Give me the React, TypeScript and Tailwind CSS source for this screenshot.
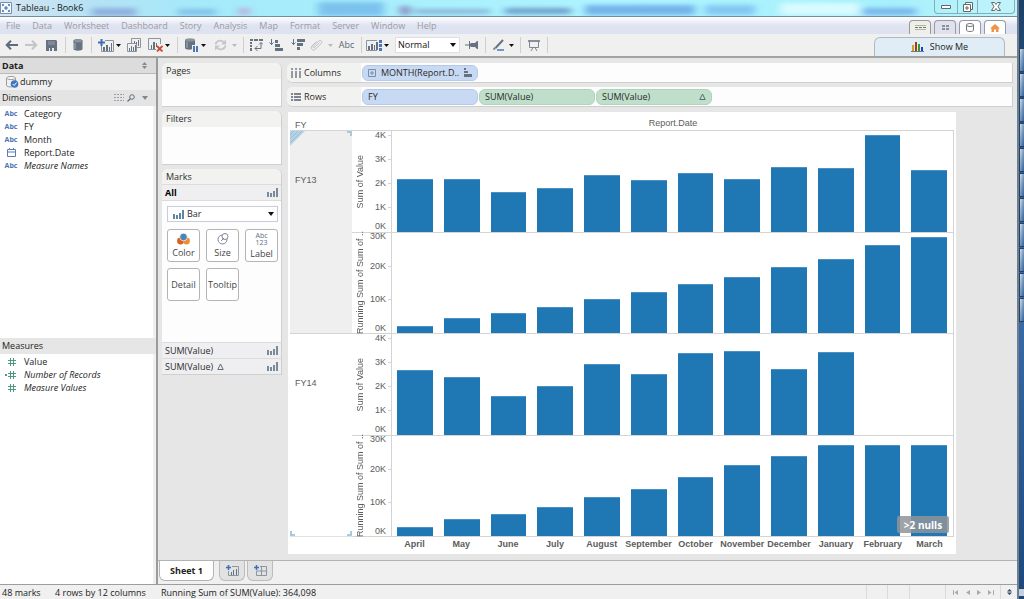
import React, { useState } from 'react';
import clsx from 'clsx';

const MENUS = ['File', 'Data', 'Worksheet', 'Dashboard', 'Story', 'Analysis', 'Map', 'Format', 'Server', 'Window', 'Help'];

const MONTHS = [
  'April', 'May', 'June', 'July', 'August', 'September',
  'October', 'November', 'December', 'January', 'February', 'March',
];

// values in thousands, null = no data for the month
const YEARS: { name: string; values: (number | null)[] }[] = [
  { name: 'FY13', values: [2.2, 2.17, 1.63, 1.81, 2.33, 2.13, 2.43, 2.17, 2.7, 2.63, 4.02, 2.57] },
  { name: 'FY14', values: [2.68, 2.39, 1.62, 2.03, 2.95, 2.51, 3.4, 3.49, 2.72, 3.42, null, null] },
];

const runningSum = (values: (number | null)[]) => {
  let total = 0;
  return values.map(v => (total += v ?? 0));
};

const Glyph: React.FC<{ w: number; h: number; children: React.ReactNode }> = ({ w, h, children }) => (
  <svg width={w} height={h} viewBox={`0 0 ${w} ${h}`} fill="none" className="block shrink-0" aria-hidden="true">
    {children}
  </svg>
);

const Caret = ({ color = '#111' }: { color?: string }) => (
  <Glyph w={5} h={3}><path d="M0 0h5L2.5 3z" fill={color} /></Glyph>
);

const WideCaret = ({ color = '#111' }: { color?: string }) => (
  <Glyph w={6} h={4}><path d="M0 0h6L3 4z" fill={color} /></Glyph>
);

const BarsIcon = ({ color = '#7a8a99' }: { color?: string }) => (
  <Glyph w={11} h={9}>
    <path d="M0 4h2v5H0zM3 5h2v4H3zM6 3h2v6H6zM9 0h2v9H9z" fill={color} />
  </Glyph>
);

const CylinderIcon = () => (
  <Glyph w={10} h={12}>
    <path d="M.5 2v8c0 2.200 9 2.200 9 0V2z" fill="#66727f" />
    <ellipse cx="5" cy="2" rx="4.500" ry="1.700" fill="#8b95a0" stroke="#66727f" strokeWidth=".6" />
    <path d="M2 4v6" stroke="#a9b2bb" />
  </Glyph>
);

const CalendarIcon = () => (
  <Glyph w={9} h={9}>
    <path d="M.5 1.500h8v7h-8zM.5 4h8M2.500 0v2M6.500 0v2" stroke="#5b7fb5" />
  </Glyph>
);

const HashIcon = ({ calculated = false }: { calculated?: boolean }) => (
  <Glyph w={12} h={8}>
    <path d="M5.500 0v8M8.500 0v8M3 2.500h8M3 5.500h8" stroke="#4d9a7c" />
    {calculated && <path d="M0 3h2v2H0z" fill="#4d9a7c" />}
  </Glyph>
);

const SortIcon = ({ descending = false }: { descending?: boolean }) => (
  <Glyph w={14} h={12}>
    <path d="M2.500 0v6M.5 3.500l2 2 2-2" stroke="#66727f" />
    <path
      d={descending ? 'M6 0h8v3H6zM6 4h6v3H6zM6 8h3v3H6z' : 'M6 1h3v3H6zM6 5h5v3H6zM6 9h8v3H6z'}
      fill="#66727f"
    />
  </Glyph>
);

interface ToolProps {
  label: string;
  width: string;
  children: React.ReactNode;
}

const Tool: React.FC<ToolProps> = ({ label, width, children }) => (
  <button type="button" aria-label={label} title={label} className={`flex h-5 shrink-0 items-center justify-center ${width}`}>
    {children}
  </button>
);

const Separator = ({ width }: { width: string }) => (
  <span className={`flex h-4 shrink-0 justify-center ${width}`}>
    <span className="w-px bg-[#cfcfcf]" />
  </span>
);

const TitleBar = () => (
  <header className="relative flex h-4 shrink-0 items-center overflow-hidden bg-[#a9ecfb]">
    <svg className="absolute inset-0 h-full w-full" preserveAspectRatio="none" viewBox="0 0 1017 16" aria-hidden="true">
      <defs>
        <filter id="glass" x="-10%" y="-80%" width="120%" height="260%"><feGaussianBlur stdDeviation="4 2" /></filter>
        <linearGradient id="sky" x1="0" x2="1">
          <stop offset="0" stopColor="#d5e5f2" />
          <stop offset=".09" stopColor="#b5e2f4" />
          <stop offset=".2" stopColor="#a4eafa" />
          <stop offset=".6" stopColor="#aef4ff" />
          <stop offset=".88" stopColor="#a5f0fc" />
          <stop offset="1" stopColor="#c2f4fb" />
        </linearGradient>
      </defs>
      <rect width="1017" height="16" fill="url(#sky)" />
      <g filter="url(#glass)">
        <rect x="92" y="8" width="44" height="8" fill="#8fb0de" />
        <rect x="178" y="9" width="38" height="6" fill="#84c0ea" />
        <rect x="238" y="8" width="12" height="7" fill="#b9b3dc" />
        <rect x="318" y="2" width="66" height="14" fill="#7cc2ee" />
        <rect x="400" y="6" width="10" height="9" fill="#8a8fc4" />
        <rect x="414" y="9" width="76" height="5" fill="#8ab8dc" />
        <rect x="505" y="8" width="66" height="6" fill="#6e9fcc" />
        <rect x="585" y="5" width="110" height="10" fill="#74b2ea" />
        <rect x="705" y="5" width="50" height="10" fill="#84c8f2" />
        <rect x="780" y="3" width="80" height="12" fill="#d9fbff" />
        <rect x="862" y="8" width="54" height="7" fill="#7cb6ec" />
      </g>
    </svg>
    <div className="relative flex flex-1 items-center gap-1">
      <Glyph w={12} h={12}>
        <path d="M.5.5h11v11H.5z" fill="#f4f8fc" stroke="#7c8fa8" />
        <path d="M6 4v4M4 6h4M3 2v2M2 3h2M9 2v2M8 3h2M3 8v2M2 9h2M9 8v2M8 9h2" stroke="#3f6aa5" />
      </Glyph>
      <h1 className="text-[9px] leading-4 text-[#1a1a1a]">Tableau - Book6</h1>
    </div>
    <div className="relative mr-[2px] flex h-[14px] self-start rounded-b border border-t-0 border-[#86aeb9] text-[#555]">
      <button type="button" aria-label="Minimize" className="flex w-[22px] items-center justify-center">
        <Glyph w={10} h={4}><path d="M.5.5h9v3h-9z" fill="#fff" stroke="#666" /></Glyph>
      </button>
      <button type="button" aria-label="Restore" className="flex w-[21px] items-center justify-center border-x border-[#86aeb9]">
        <Glyph w={10} h={10}>
          <path d="M2.500.5h7v7h-7z" fill="#fff" stroke="#666" />
          <path d="M.5 2.500h7v7h-7z" fill="#fff" stroke="#666" />
          <path d="M3 5h2v2H3z" stroke="#666" />
        </Glyph>
      </button>
      <button type="button" aria-label="Close" className="flex w-[36px] items-center justify-center">
        <Glyph w={10} h={9}>
          <path d="M.5.5h3L5 2.500 6.500.5h3L7 4.500l2.500 4h-3L5 6.500l-1.500 2h-3l2.500-4z" fill="#fff" stroke="#666" />
        </Glyph>
      </button>
    </div>
  </header>
);

const MenuBar = () => (
  <nav className="flex h-[18px] shrink-0 items-center justify-between border-t border-[#6d8fa0] bg-linear-to-b from-white via-[#dfe3f2] to-[#dde2f1] pr-[11px] pl-[6px]">
    <div className="flex gap-3 text-[9px] leading-4 text-[#9a9ba2]">
      {MENUS.map(menu => <button key={menu} type="button">{menu}</button>)}
    </div>
    <div className="flex items-end gap-[3px] self-end">
      <button type="button" aria-label="Worksheet view" className="flex h-[14px] w-[22px] items-center justify-center rounded-t border border-b-0 border-[#9a9a90] bg-[#eeeeea]">
        <Glyph w={11} h={5}>
          <path d="M0 0h11v1H0zM0 4h11v1H0z" fill="#b3b3a4" />
          <path d="M0 2h3v1H0zM4 2h3v1H4zM8 2h3v1H8z" fill="#77776a" />
        </Glyph>
      </button>
      <button type="button" aria-label="Dashboard view" className="flex h-[14px] w-[22px] items-center justify-center rounded-t border border-b-0 border-[#9a9aa4] bg-[#dfe2ec]">
        <Glyph w={7} h={5}><path d="M0 0h3v2H0zM4 0h3v2H4zM0 3h3v2H0zM4 3h3v2H4z" fill="#87929c" /></Glyph>
      </button>
      <button type="button" aria-label="Data source" className="flex h-[14px] w-[22px] items-center justify-center rounded-t border border-b-0 border-[#9a9aa4] bg-white">
        <Glyph w={8} h={9}>
          <path d="M.5 2v5c0 2 7 2 7 0V2" stroke="#777" />
          <ellipse cx="4" cy="2" rx="3.500" ry="1.500" stroke="#777" />
        </Glyph>
      </button>
      <button type="button" aria-label="Start page" className="flex h-[14px] w-[22px] items-center justify-center rounded-t border border-b-0 border-[#9a9aa4] bg-white">
        <Glyph w={10} h={8}><path d="M5 0l5 4.500H8.500V8H6V5.500H4V8H1.500V4.500H0z" fill="#ee9347" /></Glyph>
      </button>
    </div>
  </nav>
);

const Toolbar = () => {
  const [fit, setFit] = useState('Normal');

  return (
    <div className="flex h-6 shrink-0 items-center border-b-2 border-[#a3a49f] bg-[#f0f0f0] pr-3 pl-px">
      <Tool label="Undo" width="w-5">
        <Glyph w={13} h={10}><path d="M13 5H2M6 .8L1.700 5 6 9.200" stroke="#5f6b78" strokeWidth="2" /></Glyph>
      </Tool>
      <Tool label="Redo" width="w-5">
        <Glyph w={13} h={10}><path d="M0 5h11M7 .8L11.300 5 7 9.200" stroke="#c3c5c8" strokeWidth="2" /></Glyph>
      </Tool>
      <Tool label="Save" width="w-[21px]">
        <Glyph w={11} h={11}>
          <path d="M0 0h10l1 1v10H0z" fill="#66727f" />
          <path d="M2 1h7v4H2z" fill="#7e8995" />
          <path d="M3 8h5v3H3z" fill="#e9ecee" />
          <path d="M4 8h2v3H4z" fill="#66727f" />
        </Glyph>
      </Tool>
      <Separator width="w-[6px]" />
      <Tool label="Connect to data" width="w-5"><CylinderIcon /></Tool>
      <Separator width="w-[7px]" />
      <Tool label="New worksheet" width="w-[21px]">
        <Glyph w={16} h={13}>
          <path d="M7 1.500h8.500v11h-12V7" stroke="#8b95a0" />
          <path d="M5 8h2v4H5zM8 6h2v6H8zM11 8h1v4h-1zM13 4h1v8h-1z" fill="#66727f" />
          <path d="M3.500 0v7M0 3.500h7" stroke="#3f6fb5" strokeWidth="2" />
        </Glyph>
      </Tool>
      <Tool label="New worksheet options" width="w-[5px]"><Caret /></Tool>
      <Tool label="Duplicate sheet" width="w-[26px]">
        <Glyph w={14} h={14}>
          <path d="M4.500 5V.5h9v9H10M.5 5.500h9v8h-9z" stroke="#8b95a0" />
          <path d="M2 10h1v3H2zM4 8h1v5H4zM6 9h1v4H6zM8 7h1v6H8zM7 3h1v2H7zM9 4h1v2H9zM11 2h1v6h-1z" fill="#66727f" />
        </Glyph>
      </Tool>
      <Tool label="Clear sheet" width="w-[17px]">
        <Glyph w={15} h={14}>
          <path d="M8 11.500H.5V.5h12V6" stroke="#8b95a0" />
          <path d="M3 7h1v4H3zM5 4h2v7H5zM8 5h1v4H8z" fill="#66727f" />
          <path d="M9 8l5.500 5.500M14.500 8L9 13.500" stroke="#cc4a33" strokeWidth="1.800" />
        </Glyph>
      </Tool>
      <Tool label="Clear options" width="w-[7px]"><Caret /></Tool>
      <Separator width="w-[13px]" />
      <Tool label="Pause updates" width="w-[15px]">
        <Glyph w={14} h={14}>
          <path d="M0 2v8c0 2 7 2 7 1V7h3V2z" fill="#66727f" />
          <ellipse cx="5" cy="2" rx="5" ry="1.700" fill="#8b95a0" />
          <path d="M2 4v6" stroke="#a9b2bb" />
          <path d="M8 8h2v6H8zM11 8h2v6h-2z" fill="#4a78b8" />
        </Glyph>
      </Tool>
      <Tool label="Pause options" width="w-[9px]"><Caret /></Tool>
      <Tool label="Run update" width="w-6">
        <Glyph w={13} h={12}>
          <path d="M1.500 5.500C2 2 7 0 10 3.500M11.500 6.500C11 10 6 12 3 8.500" stroke="#c5c7ca" strokeWidth="1.800" />
          <path d="M12 .5v5H7zM1 11.500v-5h5z" fill="#c5c7ca" />
        </Glyph>
      </Tool>
      <Tool label="Run options" width="w-[5px]"><Caret color="#b8babd" /></Tool>
      <Separator width="w-[13px]" />
      <Tool label="Swap rows and columns" width="w-3">
        <Glyph w={13} h={12}>
          <path d="M0 0h3v2H0zM4 0h4v2H4zM9 0h4v2H9zM0 3h2v2H0zM0 6h2v2H0zM0 9h2v3H0z" fill="#66727f" />
          <path d="M11 3.500V9.500H5M7.500 7L5 9.500 7.500 12M9 5.500l2-2 2 2" stroke="#66727f" />
        </Glyph>
      </Tool>
      <Tool label="Sort ascending" width="w-7"><SortIcon /></Tool>
      <Tool label="Sort descending" width="w-4"><SortIcon descending /></Tool>
      <Tool label="Group members" width="w-[21px]">
        <Glyph w={13} h={12}>
          <path d="M9.500 3.500l-5 5c-1 1-2-.2-1.200-1.200l5-5C10.500.3 13 2.500 11 4.700l-5.500 5.500C3 12.500-.2 9.500 2 7l4.500-4.500" stroke="#bcbfc3" />
        </Glyph>
      </Tool>
      <Tool label="Group options" width="w-[7px]"><Caret color="#b8babd" /></Tool>
      <Tool label="Show mark labels" width="w-[25px]">
        <span className="text-[9px] text-[#5b6672]">Abc</span>
      </Tool>
      <Separator width="w-[5px]" />
      <Tool label="View cards" width="w-[19px]">
        <Glyph w={16} h={11}>
          <path d="M11 .5H.5v10H11" stroke="#8b95a0" />
          <path d="M2 6h2v4H2zM5 4h2v6H5zM8 5h1v5H8zM10 2h2v8h-2z" fill="#66727f" />
          <path d="M13 0h3v3h-3zM13 4h3v3h-3zM13 8h3v3h-3z" fill="#4a78b8" />
        </Glyph>
      </Tool>
      <Tool label="View card options" width="w-[7px]"><Caret /></Tool>
      <div className="relative ml-[5px] flex w-[65px] items-center border border-[#dcdfe6] bg-white">
        <select
          aria-label="Fit"
          value={fit}
          onChange={e => setFit(e.target.value)}
          className="h-[14px] w-full appearance-none pl-[2px] text-[9px] leading-3 text-[#111] outline-none"
        >
          <option>Normal</option>
          <option>Fit Width</option>
          <option>Fit Height</option>
          <option>Entire View</option>
        </select>
        <span className="pointer-events-none absolute right-[3px]"><WideCaret /></span>
      </div>
      <Tool label="Fix axes" width="w-[22px]">
        <Glyph w={13} h={8}>
          <path d="M0 4h5" stroke="#66727f" />
          <path d="M4 0h1v3l1-1h4l2-2h1v8h-1l-2-2H6L5 5v3H4z" fill="#66727f" />
        </Glyph>
      </Tool>
      <Separator width="w-[6px]" />
      <Tool label="Highlight" width="w-5">
        <Glyph w={13} h={12}>
          <path d="M11 1L3.500 9" stroke="#66727f" strokeWidth="2" />
          <path d="M1 11l1-3 2 2z" fill="#66727f" />
          <path d="M5 11h7" stroke="#4a78b8" strokeWidth="1.500" />
        </Glyph>
      </Tool>
      <Tool label="Highlight options" width="w-[7px]"><Caret /></Tool>
      <Separator width="w-[10px]" />
      <Tool label="Presentation mode" width="w-[17px]">
        <Glyph w={12} h={11}>
          <path d="M0 1h12" stroke="#66727f" strokeWidth="1.500" />
          <path d="M1.500 1v6.500h9V1M5 7.500L3 11M7 7.500L9 11" stroke="#7d8893" />
        </Glyph>
      </Tool>
      <Separator width="w-[10px]" />
      <button
        type="button"
        className="ml-auto flex h-[19px] w-[131px] items-center justify-center gap-[6px] self-end rounded-t-md border border-b-0 border-[#aeb9c2] bg-[#e0ecf6] text-[9px] text-[#222]"
      >
        <Glyph w={13} h={10}>
          <path d="M1 3h2v6H1z" fill="#c9a227" />
          <path d="M4 0h2v9H4z" fill="#b03418" />
          <path d="M7 2h2v7H7z" fill="#2ca02c" />
          <path d="M10 5h2v4h-2z" fill="#2438e0" />
          <path d="M0 9.500h13" stroke="#777" />
        </Glyph>
        Show Me
      </button>
    </div>
  );
};

const AbcIcon = () => <span className="text-[7px] font-bold text-[#4f76b3]">Abc</span>;

const Field = ({ icon, name, italic = false }: { icon: React.ReactNode; name: string; italic?: boolean }) => (
  <li>
    <button type="button" className="flex h-[13px] w-full items-center text-left leading-[13px]">
      <span className="flex w-[22px] justify-center">{icon}</span>
      <span className={clsx('pl-[2px]', italic && 'italic')}>{name}</span>
    </button>
  </li>
);

const DataPane = () => (
  <aside className="flex w-[158px] shrink-0 flex-col border-r-2 border-[#9b9b9b] bg-[#f0f0f0] text-[9px] text-[#1c1c1c]">
    <h2 className="flex h-4 items-center justify-between border-b border-[#b9b9b9] bg-[#dcdcdc] pr-[9px] pl-[2px] font-bold">
      Data
      <Glyph w={5} h={7}><path d="M0 3h5L2.500 0zM0 4h5L2.500 7z" fill="#7f8893" /></Glyph>
    </h2>
    <button type="button" className="flex h-4 items-center gap-px pl-[6px]">
      <Glyph w={13} h={12}>
        <path d="M.5 2v7.500c0 1 3 1.500 5 1.500M9.500 2v3" stroke="#999" />
        <ellipse cx="5" cy="2" rx="4.500" ry="1.500" fill="#fff" stroke="#999" />
        <circle cx="8.500" cy="8" r="3.800" fill="#3f78bd" />
        <path d="M6.700 8l1.500 1.500 2.300-3" stroke="#fff" />
      </Glyph>
      dummy
    </button>
    <h3 className="flex h-4 items-center bg-[#e4e4e4] pr-2 pl-[2px]">
      <span className="flex-1">Dimensions</span>
      <span className="flex items-center gap-[3px]">
        <Glyph w={10} h={8}>
          <path d="M0 .5h10M0 3.500h10M0 6.500h10" stroke="#9aa2ab" strokeDasharray="2 1" />
        </Glyph>
        <Glyph w={8} h={8}>
          <circle cx="5" cy="3" r="2.300" stroke="#66727f" />
          <path d="M3.300 4.700L.5 7.500" stroke="#66727f" strokeWidth="1.300" />
        </Glyph>
        <span className="pl-1"><WideCaret color="#7f8893" /></span>
      </span>
    </h3>
    <ul className="mr-[3px] flex-1 bg-white pt-px">
      <Field icon={<AbcIcon />} name="Category" />
      <Field icon={<AbcIcon />} name="FY" />
      <Field icon={<AbcIcon />} name="Month" />
      <Field icon={<CalendarIcon />} name="Report.Date" />
      <Field icon={<AbcIcon />} name="Measure Names" italic />
    </ul>
    <h3 className="flex h-4 items-center bg-[#e6e6e6] pl-[2px]">Measures</h3>
    <ul className="mr-[3px] h-[230px] bg-white pt-px">
      <Field icon={<HashIcon />} name="Value" />
      <Field icon={<HashIcon calculated />} name="Number of Records" italic />
      <Field icon={<HashIcon />} name="Measure Values" italic />
    </ul>
  </aside>
);

const MarkButton = ({ label, children }: { label: string; children?: React.ReactNode }) => (
  <button
    type="button"
    className="flex h-[33px] flex-col items-center justify-center gap-[2px] rounded-[3px] border border-[#b4b4b4] bg-white text-[9px] leading-3 text-[#444]"
  >
    {children}
    {label}
  </button>
);

const DeltaIcon = () => (
  <Glyph w={7} h={7}>
    <path d="M3.500 1L.8 6.500h5.400z" stroke="#5f6b78" />
  </Glyph>
);

const MarksRow = ({ label, bold = false, delta = false }: { label: string; bold?: boolean; delta?: boolean }) => (
  <button
    type="button"
    className={clsx('flex h-4 w-full items-center border-t border-[#dcdcdc] bg-[#efeff1] pr-[3px] pl-[3px]', bold && 'font-bold text-black')}
  >
    {label}
    {delta && <span className="pl-1"><DeltaIcon /></span>}
    <span className="ml-auto"><BarsIcon /></span>
  </button>
);

const Cards = () => (
  <div className="flex w-[120px] shrink-0 flex-col gap-1 text-[9px] text-[#2c2c2c]">
    <section className="h-11 rounded-t-md border-r border-b border-[#cfcfcf] bg-[#fdfdfd]">
      <h2 className="rounded-t-md bg-[#f2f2f0] pl-1 leading-4">Pages</h2>
    </section>
    <section className="h-[54px] rounded-t-md border-r border-b border-[#cfcfcf] bg-[#fdfdfd]">
      <h2 className="rounded-t-md bg-[#f2f2f0] pl-1 leading-4">Filters</h2>
    </section>
    <section className="rounded-t-md border-r border-b border-[#cfcfcf] bg-[#fdfdfd]">
      <h2 className="rounded-t-md bg-[#f2f2f0] pl-1 leading-[15px]">Marks</h2>
      <MarksRow label="All" bold />
      <div className="h-[142px] border-t border-[#dcdcdc] pt-[5px] pr-[3px] pl-[5px]">
        <div className="relative flex items-center border border-[#c9cdd8] bg-white">
          <span className="pointer-events-none absolute left-[5px]"><BarsIcon color="#5b86a8" /></span>
          <select
            aria-label="Mark type"
            defaultValue="Bar"
            className="h-[14px] w-full appearance-none pl-[19px] text-[9px] leading-3 outline-none"
          >
            <option>Bar</option>
            <option>Line</option>
            <option>Area</option>
          </select>
          <span className="pointer-events-none absolute right-[3px]"><WideCaret /></span>
        </div>
        <div className="mt-[7px] grid grid-cols-3 gap-[6px]">
          <MarkButton label="Color">
            <Glyph w={13} h={12}>
              <circle cx="3.500" cy="8" r="3.400" fill="#d9601a" />
              <circle cx="9.500" cy="8" r="3.400" fill="#f08a35" />
              <circle cx="6.500" cy="4" r="3.800" fill="#4f84b0" stroke="#fff" strokeWidth=".7" />
            </Glyph>
          </MarkButton>
          <MarkButton label="Size">
            <Glyph w={12} h={12}>
              <circle cx="5.500" cy="6.500" r="4.500" stroke="#7c8794" />
              <circle cx="8" cy="3.500" r="3" fill="#fff" stroke="#7c8794" />
              <path d="M4 8l3-3" stroke="#7c8794" />
            </Glyph>
          </MarkButton>
          <MarkButton label="Label">
            <span className="flex flex-col text-center text-[7px] leading-[7px] text-[#5f6b84]">
              <span>Abc</span>
              <span>123</span>
            </span>
          </MarkButton>
          <MarkButton label="Detail" />
          <MarkButton label="Tooltip" />
        </div>
      </div>
      <MarksRow label="SUM(Value)" />
      <MarksRow label="SUM(Value)" delta />
    </section>
  </div>
);

const Pill = ({ children, measure = false }: { children: React.ReactNode; measure?: boolean }) => (
  <button
    type="button"
    className={clsx(
      'flex h-4 w-[116px] items-center rounded-md border pr-[5px] pl-[5px] text-left',
      measure ? 'border-[#afd4be] bg-[#bfdfcb]' : 'border-[#b4c8ea] bg-[#c8d9f4]'
    )}
  >
    {children}
  </button>
);

const Shelf = ({ name, icon, children }: { name: string; icon: React.ReactNode; children: React.ReactNode }) => (
  <div className="flex h-5 items-center rounded-l-md border-r border-b border-[#cfcfcf] bg-[#fdfdfd]">
    <h2 className="mr-px flex w-[74px] items-center gap-[3px] self-stretch rounded-l-md bg-[#f2f2f0] pl-1">{icon}{name}</h2>
    <div className="flex gap-px">{children}</div>
  </div>
);

const Shelves = () => (
  <div className="flex flex-col gap-1 text-[9px] text-[#2a2a2a]">
    <Shelf
      name="Columns"
      icon={<Glyph w={10} h={10}><path d="M0 0h2v2H0zM4 0h2v2H4zM8 0h2v2H8zM0 3h2v7H0zM4 3h2v7H4zM8 3h2v7H8z" fill="#9299a1" /></Glyph>}
    >
      <Pill>
        <Glyph w={8} h={8}><path d="M.5.5h7v7h-7zM2 4h4M4 2v4" stroke="#7d8ea8" /></Glyph>
        <span className="pl-[5px]">MONTH(Report.D..</span>
        <span className="ml-auto pl-1">
          <Glyph w={8} h={9}><path d="M0 0h2v2H0zM0 3h4v2H0zM0 6h8v3H0z" fill="#66727f" /></Glyph>
        </span>
      </Pill>
    </Shelf>
    <Shelf
      name="Rows"
      icon={<Glyph w={10} h={8}><path d="M0 0h2v2H0zM0 3h2v2H0zM0 6h2v2H0zM3 0h7v2H3zM3 3h7v2H3zM3 6h7v2H3z" fill="#7d858e" /></Glyph>}
    >
      <Pill>FY</Pill>
      <Pill measure>SUM(Value)</Pill>
      <Pill measure>SUM(Value)<span className="ml-auto"><DeltaIcon /></span></Pill>
    </Shelf>
  </div>
);

interface PaneProps {
  title: string;
  values: (number | null)[];
  ticks: number[];
  max: number; // value at the top edge of the pane
}

const Pane: React.FC<PaneProps> = ({ title, values, ticks, max }) => (
  <div className="flex min-h-0 flex-1 border-b border-[#d4d4d4]">
    <div className="flex w-4 shrink-0 items-center justify-center">
      <span className="rotate-180 text-[9px] leading-none whitespace-nowrap [writing-mode:vertical-rl]">{title}</span>
    </div>
    <div className="relative w-6 shrink-0 border-r border-[#d4d4d4]">
      {ticks.map(tick => (
        <div
          key={tick}
          className={clsx(
            'absolute right-0 flex h-2 items-center gap-[2px] text-[9px] leading-none font-medium',
            tick === 0 ? 'mb-px' : tick === 30 ? '-mb-2' : '-mb-1'
          )}
          style={{ bottom: `${(tick / max) * 100}%` }}
        >
          {tick}K
          <span className={clsx('h-px w-[3px]', tick > 0 && tick < 30 && 'bg-[#d4d4d4]')} />
        </div>
      ))}
    </div>
    <div className="grid flex-1 grid-cols-12 border-r border-[#d4d4d4]">
      {values.map((value, i) => (
        <div key={MONTHS[i]} className="flex items-end pr-[6px] pl-[5px]">
          {value !== null && (
            <div
              className="w-full border-t border-[#4a92c6] bg-[#1f77b4]"
              style={{ height: `${(value / max) * 100}%` }}
            />
          )}
        </div>
      ))}
    </div>
  </div>
);

const Viz = () => (
  <main className="relative mr-[57px] ml-px flex min-h-0 flex-1 flex-col bg-white px-[2px] font-['Liberation_Sans',Arial,sans-serif] text-[#5c5c5c]">
    <div className="flex h-[19px] shrink-0 border-b border-[#d4d4d4] text-[9px]">
      <span className="w-[102px] pt-[7px] pl-[5px] leading-3">FY</span>
      <span className="flex-1 pt-[5px] text-center leading-3">Report.Date</span>
    </div>
    {YEARS.map((year, i) => (
      <div key={year.name} className="flex min-h-0 flex-1">
        <div
          className={clsx(
            'relative w-[62px] shrink-0 pl-[5px] text-[9px]',
            i === 0 ? 'border-b border-[#d4d4d4] bg-[#efefef]' : 'border-b border-[#e2e2e2]'
          )}
        >
          {i === 0 ? (
            <>
              <span className="absolute top-0 left-0">
                <Glyph w={15} h={15}>
                  <path d="M0 0h15L0 15z" fill="#b5d2e6" />
                  <path d="M0 4l4-4M0 8l8-8M0 12L12 0" stroke="#94bdd9" />
                </Glyph>
              </span>
              <span className="absolute top-0 right-0 h-[5px] w-[5px] border-t-2 border-r-2 border-[#a9c9df]" />
            </>
          ) : (
            <>
              <span className="absolute bottom-0 left-0 h-[5px] w-[5px] border-b-2 border-l-2 border-[#a9c9df]" />
              <span className="absolute right-0 bottom-0 h-[5px] w-[5px] border-r-2 border-b-2 border-[#a9c9df]" />
            </>
          )}
          <div className="pt-[43px] leading-3">{year.name}</div>
        </div>
        <div className="flex flex-1 flex-col">
          <Pane title="Sum of Value" values={year.values} ticks={[4, 3, 2, 1, 0]} max={4.18} />
          <Pane title="Running Sum of Sum of .." values={runningSum(year.values)} ticks={[30, 20, 10, 0]} max={30} />
        </div>
      </div>
    ))}
    <div className="mr-px ml-[101px] grid h-[17px] shrink-0 grid-cols-12 text-center text-[9px] leading-[15px] font-bold">
      {MONTHS.map(month => (
        <span key={month} className="flex justify-center">{month}</span>
      ))}
    </div>
    <button type="button" className="absolute right-[7px] bottom-[21px] h-[17px] w-[52px] rounded-xs bg-[#8f9499]/85 font-['Open_Sans',sans-serif] text-[10px] leading-4 font-bold text-white">
      &gt;2 nulls
    </button>
  </main>
);

const SheetTabs = () => (
  <div className="flex h-6 shrink-0 items-start border-t border-[#b3b3b3] bg-[#f0f0f0] pl-px">
    <button type="button" className="h-5 w-[55px] rounded-b-md border border-t-0 border-[#b3b3b3] bg-white text-[9px] font-bold text-[#222]">
      Sheet 1
    </button>
    <button type="button" aria-label="New worksheet" className="ml-[5px] flex h-5 w-[26px] items-center justify-center rounded-b-md border border-t-0 border-[#bcbcbc] bg-[#e2e2e2]">
      <Glyph w={13} h={11}>
        <path d="M6 1.500h6.500v9h-10V6" stroke="#8b95a0" />
        <path d="M5 7h1v3H5zM7 5h1v5H7zM10 4h1v6h-1z" fill="#66727f" />
        <path d="M2.500 0v5M0 2.500h5" stroke="#3f6fb5" strokeWidth="1.500" />
      </Glyph>
    </button>
    <button type="button" aria-label="New dashboard" className="ml-[2px] flex h-5 w-[26px] items-center justify-center rounded-b-md border border-t-0 border-[#bcbcbc] bg-[#e2e2e2]">
      <Glyph w={13} h={11}>
        <path d="M6 1.500h6.500v9h-10V6M2.500 6h10M7.500 2v8.500" stroke="#8b95a0" />
        <path d="M2.500 0v5M0 2.500h5" stroke="#3f6fb5" strokeWidth="1.500" />
      </Glyph>
    </button>
  </div>
);

const StatusBar = () => (
  <footer className="flex h-[15px] shrink-0 items-stretch border-t border-[#9d9d9d] bg-[#f0f0f0] pl-[2px] text-[9px] leading-[15px] text-[#222]">
    <span className="w-[53px]">48 marks</span>
    <span className="w-[106px]">4 rows by 12 columns</span>
    <span className="flex-1">Running Sum of SUM(Value): 364,098</span>
    <span className="w-[21px] border-l border-[#dadada]" />
    <span className="w-[22px] border-l border-[#dadada]" />
    <span className="w-[36px] border-l border-[#dadada]" />
    <div className="flex w-[56px] items-center justify-around border-x border-[#dadada] px-[3px]">
      <button type="button" aria-label="First"><Glyph w={6} h={5}><path d="M0 0h1v5H0zM5 0v5L1.500 2.500z" fill="#aaa" /></Glyph></button>
      <button type="button" aria-label="Previous"><Glyph w={4} h={5}><path d="M4 0v5L0 2.500z" fill="#aaa" /></Glyph></button>
      <button type="button" aria-label="Next"><Glyph w={4} h={5}><path d="M0 0v5l4-2.500z" fill="#aaa" /></Glyph></button>
      <button type="button" aria-label="Last"><Glyph w={6} h={5}><path d="M0 0v5l3.500-2.500zM5 0h1v5H5z" fill="#aaa" /></Glyph></button>
    </div>
    <button type="button" aria-label="Sheet sorter" className="flex w-4 items-center justify-center">
      <Glyph w={5} h={6}><path d="M0 2.500h5L2.500 0zM0 3.500h5L2.500 6z" fill="#33475f" /></Glyph>
    </button>
  </footer>
);

// sliver of the desktop sidebar visible to the right of the window
const DesktopEdge = () => (
  <div className="flex w-[7px] shrink-0 flex-col gap-px overflow-hidden border-l-2 border-[#6c7f91] bg-linear-to-b from-[#1d4068] via-[#3b6da8] to-[#1d477c] pt-12">
    {Array.from({ length: 11 }, (_, i) => (
      <div key={i} className="h-6 shrink-0 border-t border-b border-l border-[#27405f] bg-linear-to-br from-[#d5dfe9] via-[#7898bd] to-[#2f5f98]" />
    ))}
    <div className="mt-auto mb-[3px] h-2 border-t border-[#27405f] bg-[#c3d0dd]" />
  </div>
);

const App = () => (
  <div className="flex h-screen bg-[#e6e6e6] font-['Open_Sans','Noto_Sans',sans-serif]">
    <div className="flex min-w-0 flex-1 flex-col">
      <TitleBar />
      <MenuBar />
      <Toolbar />
      <div className="flex min-h-0 flex-1">
        <DataPane />
        <div className="flex min-w-0 flex-1 flex-col">
          <div className="flex min-h-0 flex-1 gap-[5px] pt-[5px] pr-1 pb-[6px] pl-1">
            <Cards />
            <div className="flex min-w-0 flex-1 flex-col gap-[5px]">
              <Shelves />
              <Viz />
            </div>
          </div>
          <SheetTabs />
        </div>
      </div>
      <StatusBar />
    </div>
    <DesktopEdge />
  </div>
);

export default App;
